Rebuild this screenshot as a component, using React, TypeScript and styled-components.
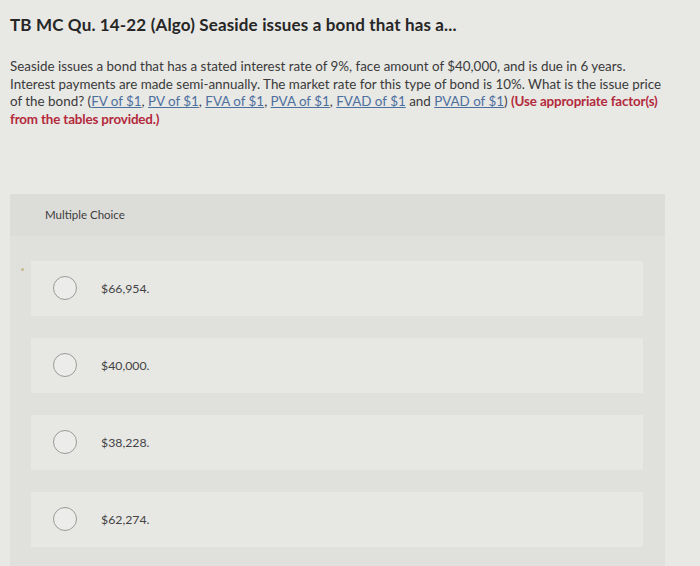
import React from "react";
import styled, { createGlobalStyle } from "styled-components";

const Global = createGlobalStyle`
  html, body { margin: 0; padding: 0; background: #e8e8e5; }
  body { font-family: Lato, "Open Sans", "Liberation Sans", sans-serif; width: 700px; height: 566px; overflow: hidden; }
`;

const Page = styled.div`
  padding: 14px 10px 0 10px;
  box-sizing: border-box;
  width: 700px;
  height: 566px;
  background: #e8e8e5;
`;

const Title = styled.h1`
  margin: 0;
  font-size: 17px;
  font-weight: 700;
  color: #262626;
  line-height: 22px;
  letter-spacing: 0.15px;
`;

const Question = styled.p`
  margin: 22px 0 0 0;
  font-size: 13.4px;
  line-height: 17.7px;
  color: #3a3a3a;
`;

const Link = styled.a`
  color: #4d6f9e;
  text-decoration: underline;
`;

const Hint = styled.strong`
  color: #b32a3c;
  font-weight: 700;
  letter-spacing: -0.15px;
`;

const Panel = styled.section`
  margin-top: 65px;
  width: 655px;
  background: #e0e0dd;
  height: 400px;
`;

const PanelHeader = styled.div`
  height: 42px;
  background: #dcdcd9;
  display: flex;
  align-items: center;
  padding-left: 35px;
  font-size: 11.5px;
  color: #3c3c3c;
`;

const PanelBody = styled.div`
  position: relative;
  padding: 25px 22px 0 21px;
  display: flex;
  flex-direction: column;
  gap: 22px;
`;

const Dot = styled.span`
  position: absolute;
  left: 11px;
  top: 32px;
  width: 3px;
  height: 3px;
  border-radius: 50%;
  background: #c9b98a;
`;

const Option = styled.label`
  height: 55px;
  background: #e7e7e4;
  display: flex;
  align-items: center;
  padding-left: 22px;
  gap: 24px;
  font-size: 12.3px;
  color: #444;
`;

const Radio = styled.span`
  width: 24px;
  height: 24px;
  box-sizing: border-box;
  border-radius: 50%;
  border: 1.3px solid #9a9a9a;
  background: #ececea;
  flex: none;
`;

const options = ["$66,954.", "$40,000.", "$38,228.", "$62,274."];

export default function App() {
  return (
    <>
      <Global />
      <Page>
        <Title>TB MC Qu. 14-22 (Algo) Seaside issues a bond that has a...</Title>
        <Question>
          Seaside issues a bond that has a stated interest rate of 9%, face amount of $40,000, and is due in 6 years.
          <br />
          Interest payments are made semi-annually. The market rate for this type of bond is 10%. What is the issue price
          <br />
          of the bond? (<Link>FV of $1</Link>, <Link>PV of $1</Link>, <Link>FVA of $1</Link>, <Link>PVA of $1</Link>,{" "}
          <Link>FVAD of $1</Link> and <Link>PVAD of $1</Link>) <Hint>(Use appropriate factor(s)</Hint>
          <br />
          <Hint>from the tables provided.)</Hint>
        </Question>
        <Panel>
          <PanelHeader>Multiple Choice</PanelHeader>
          <PanelBody>
            <Dot />
            {options.map((o) => (
              <Option key={o}>
                <Radio />
                {o}
              </Option>
            ))}
          </PanelBody>
        </Panel>
      </Page>
    </>
  );
}
